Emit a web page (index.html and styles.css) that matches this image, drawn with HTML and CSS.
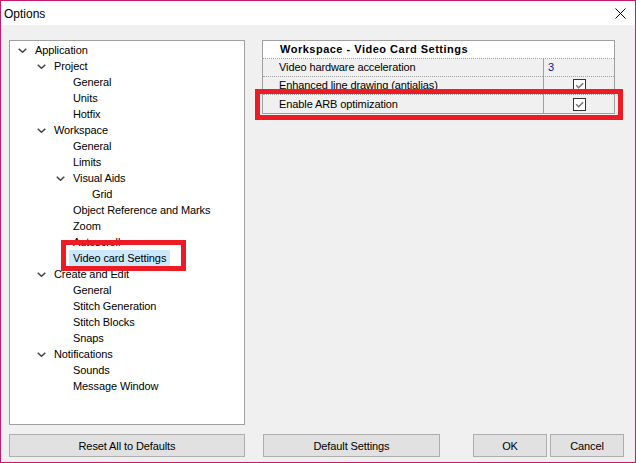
FILE: index.html
```html
<!DOCTYPE html>
<html>
<head>
<meta charset="utf-8">
<link rel="stylesheet" href="styles.css">
</head>
<body>
<div class="window">
  <div class="titlebar">
    <span class="title">Options</span>
    <svg class="close" width="11" height="11" viewBox="0 0 11 11"><path d="M0.5 0.5 L10.5 10.5 M10.5 0.5 L0.5 10.5" stroke="#000" stroke-width="1" fill="none"/></svg>
  </div>
  <div class="content">
    <div class="main">
      <div class="tree">
        <div class="node l0"><span class="exp"><svg width="9" height="5" viewBox="0 0 9 5"><polyline points="0.7,0.7 4.5,4.3 8.3,0.7" class="chev"/></svg></span><span class="label">Application</span></div>
        <div class="node l1"><span class="exp"><svg width="9" height="5" viewBox="0 0 9 5"><polyline points="0.7,0.7 4.5,4.3 8.3,0.7" class="chev"/></svg></span><span class="label">Project</span></div>
        <div class="node l2"><span class="exp"></span><span class="label">General</span></div>
        <div class="node l2"><span class="exp"></span><span class="label">Units</span></div>
        <div class="node l2"><span class="exp"></span><span class="label">Hotfix</span></div>
        <div class="node l1"><span class="exp"><svg width="9" height="5" viewBox="0 0 9 5"><polyline points="0.7,0.7 4.5,4.3 8.3,0.7" class="chev"/></svg></span><span class="label">Workspace</span></div>
        <div class="node l2"><span class="exp"></span><span class="label">General</span></div>
        <div class="node l2"><span class="exp"></span><span class="label">Limits</span></div>
        <div class="node l2"><span class="exp"><svg width="9" height="5" viewBox="0 0 9 5"><polyline points="0.7,0.7 4.5,4.3 8.3,0.7" class="chev"/></svg></span><span class="label">Visual Aids</span></div>
        <div class="node l3"><span class="exp"></span><span class="label">Grid</span></div>
        <div class="node l2"><span class="exp"></span><span class="label">Object Reference and Marks</span></div>
        <div class="node l2"><span class="exp"></span><span class="label">Zoom</span></div>
        <div class="node l2"><span class="exp"></span><span class="label">Autoscroll</span></div>
        <div class="node l2"><span class="exp"></span><span class="label selected">Video card Settings</span></div>
        <div class="node l1"><span class="exp"><svg width="9" height="5" viewBox="0 0 9 5"><polyline points="0.7,0.7 4.5,4.3 8.3,0.7" class="chev"/></svg></span><span class="label">Create and Edit</span></div>
        <div class="node l2"><span class="exp"></span><span class="label">General</span></div>
        <div class="node l2"><span class="exp"></span><span class="label">Stitch Generation</span></div>
        <div class="node l2"><span class="exp"></span><span class="label">Stitch Blocks</span></div>
        <div class="node l2"><span class="exp"></span><span class="label">Snaps</span></div>
        <div class="node l1"><span class="exp"><svg width="9" height="5" viewBox="0 0 9 5"><polyline points="0.7,0.7 4.5,4.3 8.3,0.7" class="chev"/></svg></span><span class="label">Notifications</span></div>
        <div class="node l2"><span class="exp"></span><span class="label">Sounds</span></div>
        <div class="node l2"><span class="exp"></span><span class="label">Message Window</span></div>
      </div>
      <div class="grid">
        <div class="grid-header">Workspace - Video Card Settings</div>
        <div class="grid-row">
          <div class="name">Video hardware acceleration</div>
          <div class="value value-text">3</div>
        </div>
        <div class="grid-row">
          <div class="name">Enhanced line drawing (antialias)</div>
          <div class="value value-check"><span class="check"><svg width="11" height="11" viewBox="0 0 11 11"><polyline points="2.2,5.3 4.6,7.8 9.2,3.2" class="tick"/></svg></span></div>
        </div>
        <div class="grid-row last">
          <div class="name">Enable ARB optimization</div>
          <div class="value value-check"><span class="check"><svg width="11" height="11" viewBox="0 0 11 11"><polyline points="2.2,5.3 4.6,7.8 9.2,3.2" class="tick"/></svg></span></div>
        </div>
      </div>
    </div>
    <div class="buttons">
      <div class="btn btn-reset">Reset All to Defaults</div>
      <div class="btn btn-default">Default Settings</div>
      <div class="btn btn-ok">OK</div>
      <div class="btn btn-cancel">Cancel</div>
    </div>
  </div>
  <div class="mark mark-tree"></div>
  <div class="mark mark-grid"></div>
</div>
</body>
</html>
```
FILE: styles.css
```css
html, body {
  margin: 0;
  padding: 0;
  background: #ffffff;
}
.window {
  position: relative;
  width: 636px;
  height: 463px;
  box-sizing: border-box;
  border: 1px solid #c8196b;
  display: flex;
  flex-direction: column;
  font-family: "Liberation Sans", Arial, sans-serif;
  font-size: 11px;
  color: #000;
}
.titlebar {
  height: 24px;
  background: #ffffff;
  display: flex;
  align-items: center;
  justify-content: space-between;
  padding: 0 9px 0 3px;
  flex: none;
}
.title {
  font-size: 12px;
  line-height: 16px;
  margin-top: 1px;
}
.close {
  display: block;
  margin-top: 1px;
}
.content {
  flex: 1;
  background: #f0f0f0;
  padding: 15px 0 0 8px;
  display: flex;
  flex-direction: column;
}
.main {
  display: flex;
  gap: 17px;
  align-items: flex-start;
}
.tree {
  width: 236px;
  height: 385px;
  box-sizing: border-box;
  border: 1px solid #a0a0a0;
  background: #ffffff;
  padding-top: 1px;
  flex: none;
}
.node {
  display: flex;
  align-items: center;
  height: 16px;
  letter-spacing: -0.1px;
}
.l0 { padding-left: 5px; }
.l1 { padding-left: 24px; }
.l2 { padding-left: 43px; }
.l3 { padding-left: 62px; }
.exp {
  width: 16px;
  height: 16px;
  flex: none;
  display: flex;
  align-items: center;
  padding-left: 3px;
  box-sizing: border-box;
}
.exp svg { display: block; }
.chev {
  fill: none;
  stroke: #404040;
  stroke-width: 1.4;
}
.label {
  padding: 0 4px;
  line-height: 16px;
  height: 16px;
  white-space: nowrap;
}
.selected {
  background: #cce8ff;
}
.grid {
  width: 353px;
  box-sizing: border-box;
  border: 1px solid #a0a0a0;
  flex: none;
}
.grid-header {
  height: 17px;
  line-height: 17px;
  background: #ffffff;
  font-weight: bold;
  letter-spacing: 0.5px;
  padding-left: 17px;
  border-bottom: 1px dotted #a0a0a0;
}
.grid-row {
  display: flex;
  height: 18px;
  background: #f0f0f0;
  letter-spacing: -0.1px;
}
.name {
  flex: 1;
  padding-left: 16px;
  line-height: 17px;
  border-bottom: 1px dotted #a0a0a0;
  white-space: nowrap;
  overflow: hidden;
}
.value {
  width: 71px;
  box-sizing: border-box;
  border-left: 1px solid #a0a0a0;
  border-bottom: 1px dotted #a0a0a0;
}
.grid-row.last .name,
.grid-row.last .value {
  border-bottom: none;
  line-height: 18px;
}
.value-text {
  color: #1010b0;
  padding-left: 4px;
  line-height: 17px;
}
.value-check {
  display: flex;
  align-items: center;
  justify-content: center;
  padding-left: 1px;
}
.check {
  width: 13px;
  height: 13px;
  box-sizing: border-box;
  border: 1px solid #333333;
  background: #ffffff;
  display: block;
}
.check svg { display: block; }
.tick {
  fill: none;
  stroke: #707070;
  stroke-width: 1.4;
}
.buttons {
  display: flex;
  margin-top: 9px;
}
.btn {
  height: 23px;
  box-sizing: border-box;
  border: 1px solid #adadad;
  background: #e1e1e1;
  display: flex;
  align-items: center;
  justify-content: center;
  letter-spacing: -0.1px;
  flex: none;
}
.btn-reset { width: 236px; }
.btn-default { width: 177px; margin-left: 18px; }
.btn-ok { width: 74px; margin-left: 33px; }
.btn-cancel { width: 74px; margin-left: 3px; }
.mark {
  position: absolute;
  box-sizing: border-box;
  border: 5px solid #ed1c24;
}
.mark-tree {
  left: 60px;
  top: 239px;
  width: 125px;
  height: 31px;
}
.mark-grid {
  left: 254px;
  top: 88px;
  width: 368px;
  height: 31px;
}
```
